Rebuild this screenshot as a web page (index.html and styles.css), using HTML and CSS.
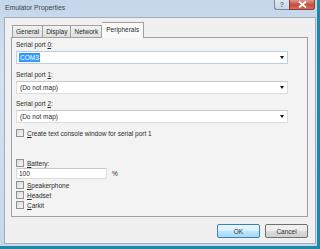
FILE: index.html
```html
<!DOCTYPE html>
<html>
<head>
<meta charset="utf-8">
<link rel="stylesheet" href="styles.css">
</head>
<body>
<div class="window">
  <div class="titlebar">
    <span class="title">Emulator Properties</span>
    <div class="caption">
      <span class="cbtn help">?</span>
      <span class="cbtn close">
        <svg width="9" height="7" viewBox="0 0 9 7"><path d="M1 0.5 L8 6.5 M8 0.5 L1 6.5" stroke="#fff" stroke-width="1.8"/></svg>
      </span>
    </div>
  </div>
  <div class="client">
    <div class="tabs">
      <span class="tab">General</span>
      <span class="tab">Display</span>
      <span class="tab">Network</span>
      <span class="tab active">Peripherals</span>
    </div>
    <div class="panel">
      <div class="label l1">Serial port <u>0</u>:</div>
      <div class="combo focused"><span class="sel">COM3</span><span class="arrow"></span></div>
      <div class="label l2">Serial port <u>1</u>:</div>
      <div class="combo"><span class="val">(Do not map)</span><span class="arrow"></span></div>
      <div class="label l3">Serial port <u>2</u>:</div>
      <div class="combo"><span class="val">(Do not map)</span><span class="arrow"></span></div>
      <div class="check c1"><span class="box"></span><span><u>C</u>reate text console window for serial port 1</span></div>
      <div class="check c2"><span class="box"></span><span><u>B</u>attery:</span></div>
      <div class="inputrow"><span class="input">100</span><span class="pct">%</span></div>
      <div class="check c3"><span class="box"></span><span><u>S</u>peakerphone</span></div>
      <div class="check"><span class="box"></span><span><u>H</u>eadset</span></div>
      <div class="check"><span class="box"></span><span><u>C</u>arkit</span></div>
    </div>
    <div class="buttons">
      <span class="btn ok">OK</span>
      <span class="btn">Cancel</span>
    </div>
  </div>
</div>
</body>
</html>
```
FILE: styles.css
```css
html, body {
  margin: 0;
  padding: 0;
  width: 320px;
  height: 249px;
  overflow: hidden;
  background: #1b8aa8;
}
.window {
  width: 320px;
  height: 249px;
  box-sizing: border-box;
  display: flex;
  flex-direction: column;
  background: linear-gradient(to bottom, #c4d6ea 0%, #d3e2f1 30%, #c6d8ec 100%);
  border-right: 3px solid #1b8aa8;
  border-bottom: 3px solid #1b8aa8;
  font-family: "Liberation Sans", Arial, sans-serif;
  font-size: 6.5px;
  color: #2b2b2b;
}
.titlebar {
  height: 17px;
  display: flex;
  justify-content: space-between;
  align-items: flex-start;
  flex: none;
}
.title {
  font-size: 6.8px;
  color: #3a4450;
  padding-left: 5px;
  padding-top: 4px;
}
.caption {
  display: flex;
  margin-right: 2px;
}
.cbtn {
  height: 9px;
  display: flex;
  align-items: center;
  justify-content: center;
  border: 1px solid #7d8a9a;
  border-top: none;
}
.help {
  width: 14px;
  border-radius: 0 0 0 3px;
  background: linear-gradient(to bottom, #dfe8f2, #c9d6e4);
  color: #6a7480;
  font-size: 7px;
  font-weight: bold;
  border-right: none;
}
.close {
  width: 24px;
  border-radius: 0 0 3px 0;
  background: linear-gradient(to bottom, #e09a8c, #c9493a 55%, #d4705e);
  border-color: #8e3a30;
}
.client {
  flex: 1;
  margin: 0 1px 2px 4px;
  border: 1px solid #a3acb8;
  background: #f0f0f0;
  padding: 4px 6px 0 6px;
  display: flex;
  flex-direction: column;
}
.tabs {
  display: flex;
  align-items: flex-end;
  height: 15px;
  padding-left: 1px;
  position: relative;
  z-index: 1;
}
.tab {
  height: 12px;
  box-sizing: border-box;
  border: 1px solid #a0a0a0;
  border-bottom: none;
  border-right: none;
  background: linear-gradient(to bottom, #f2f2f2, #e0e0e0);
  padding: 0 3px;
  line-height: 11px;
  color: #2a2a2a;
}
.tab:nth-child(3) { border-right: 1px solid #a0a0a0; }
.tab.active {
  background: #fafafa;
  border-right: 1px solid #a0a0a0;
  border-left: none;
  padding: 0 4px 0 4px;
  line-height: 13px;
  margin-bottom: -1px;
  height: 16px;
}
.panel {
  width: 297px;
  height: 180px;
  box-sizing: border-box;
  border: 1px solid #a0a0a0;
  background: #f3f3f3;
  padding: 2px 4px 0 4px;
  display: flex;
  flex-direction: column;
  align-items: flex-start;
}
.label {
  height: 9px;
  line-height: 9px;
}
.l2 { margin-top: 6px; }
.l3 { margin-top: 5px; }
.combo {
  margin-top: 2px;
  width: 272px;
  height: 13px;
  box-sizing: border-box;
  background: #fff;
  border: 1px solid #dcdcdc;
  border-top-color: #c8c8c8;
  display: flex;
  align-items: center;
  justify-content: space-between;
  padding: 0 3px 0 2px;
}
.combo.focused {
  border-color: #b9cfe6;
}
.sel {
  background: #3399ff;
  color: #fff;
  padding: 0 1px;
  line-height: 9px;
}
.val { padding-left: 1px; }
.arrow {
  width: 0;
  height: 0;
  border-left: 2.5px solid transparent;
  border-right: 2.5px solid transparent;
  border-top: 3px solid #111;
}
.check {
  height: 10px;
  display: flex;
  align-items: center;
  gap: 3px;
}
.c1 { margin-top: 5px; }
.c2 { margin-top: 20px; }
.c3 { margin-top: 1px; }
.box {
  width: 8px;
  height: 8px;
  box-sizing: border-box;
  border: 1px solid #8e8f8f;
  background: linear-gradient(135deg, #dcdcdc, #f4f4f4);
}
.inputrow {
  display: flex;
  align-items: center;
  gap: 5px;
}
.input {
  width: 91px;
  height: 11px;
  box-sizing: border-box;
  background: #fff;
  border: 1px solid #dcdcdc;
  border-top-color: #c8c8c8;
  line-height: 9px;
  padding-left: 2px;
}
.buttons {
  display: flex;
  justify-content: flex-end;
  gap: 5px;
  margin-top: 7px;
  width: 297px;
}
.btn {
  width: 43px;
  height: 14px;
  box-sizing: border-box;
  border: 1px solid #707070;
  border-radius: 2px;
  background: linear-gradient(to bottom, #f2f2f2 0%, #ebebeb 50%, #dddddd 51%, #cfcfcf 100%);
  display: flex;
  align-items: center;
  justify-content: center;
  color: #333;
}
.btn.ok {
  border-color: #3c7fb1;
  background: linear-gradient(to bottom, #eaf6fd 0%, #d9f0fc 50%, #bee6fd 51%, #a7d9f5 100%);
}
```
